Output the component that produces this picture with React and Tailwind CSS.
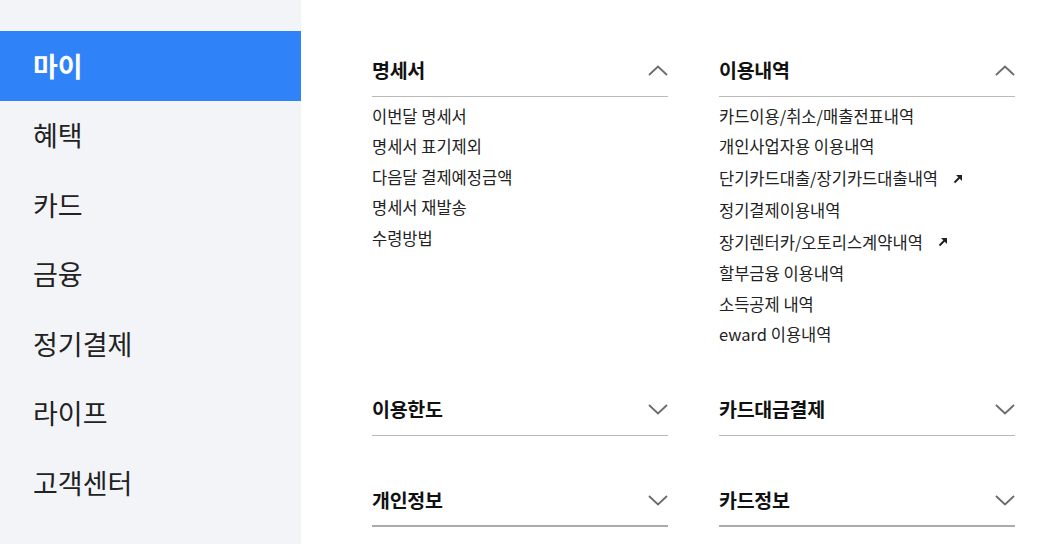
const menu = ['마이', '혜택', '카드', '금융', '정기결제', '라이프', '고객센터'];

const sections = [
  {
    title: '명세서',
    open: true,
    items: [{ t: '이번달 명세서' }, { t: '명세서 표기제외' }, { t: '다음달 결제예정금액' }, { t: '명세서 재발송' }, { t: '수령방법' }],
  },
  {
    title: '이용내역',
    open: true,
    items: [
      { t: '카드이용/취소/매출전표내역' },
      { t: '개인사업자용 이용내역' },
      { t: '단기카드대출/장기카드대출내역', ext: true },
      { t: '정기결제이용내역' },
      { t: '장기렌터카/오토리스계약내역', ext: true },
      { t: '할부금융 이용내역' },
      { t: '소득공제 내역' },
      { t: 'eward 이용내역' },
    ],
  },
  { title: '이용한도' },
  { title: '카드대금결제' },
  { title: '개인정보', last: true },
  { title: '카드정보', last: true },
];

function Chevron({ up }) {
  return (
    <svg width="20" height="11" viewBox="0 0 20 11" fill="none">
      <polyline points={up ? '1,10 10,1.5 19,10' : '1,1 10,9.5 19,1'} stroke="#6b6b6b" strokeWidth="1.8" />
    </svg>
  );
}

function ExtArrow() {
  return (
    <svg width="10" height="10" viewBox="0 0 10 10" className="ml-[15px] shrink-0">
      <line x1="1.5" y1="8.5" x2="7" y2="3" stroke="#222" strokeWidth="2" />
      <polygon points="3,1 9,1 9,7" fill="#222" />
    </svg>
  );
}

function Section({ s, i }) {
  const spacing = i < 2 ? 'mb-[39px]' : 'mb-[44px]';
  return (
    <div className={spacing}>
      <div className={`flex h-[47px] items-start justify-between pb-[7px] ${s.last ? 'border-b-2 border-[#ababab]' : 'border-b border-[#b9b9b9]'}`}>
        <div className="flex h-[40px] items-center text-[19.5px] font-bold tracking-[-0.3px] text-[#111]">{s.title}</div>
        <div className="flex h-[40px] items-center">
          <Chevron up={s.open} />
        </div>
      </div>
      {s.open && (
        <ul className="pt-[4px]">
          {s.items.map((it) => (
            <li key={it.t} className={`flex items-center text-[16.5px] text-[#222] ${it.ext ? 'h-[33px]' : 'h-[30.5px]'}`}>
              {it.t}
              {it.ext && <ExtArrow />}
            </li>
          ))}
        </ul>
      )}
    </div>
  );
}

export default function App() {
  return (
    <div
      className="flex h-[544px] w-[1055px] overflow-hidden bg-white"
      style={{ fontFamily: '"Noto Sans CJK KR", "Noto Sans", sans-serif' }}
    >
      <aside className="w-[301px] shrink-0 bg-[#f3f4f8] pt-[31px]">
        {menu.map((m, i) => (
          <div
            key={m}
            className={`flex h-[69.5px] items-center px-[33px] text-[27px] ${i === 0 ? 'bg-[#2f82f8] font-semibold text-white' : 'text-[#222]'}`}
          >
            {m}
          </div>
        ))}
      </aside>
      <main className="flex-1 pl-[71px] pt-[50px]">
        <div className="grid w-[643px] grid-cols-2 gap-x-[51px]">
          {sections.map((s, i) => (
            <Section key={s.title} s={s} i={i} />
          ))}
        </div>
      </main>
    </div>
  );
}
